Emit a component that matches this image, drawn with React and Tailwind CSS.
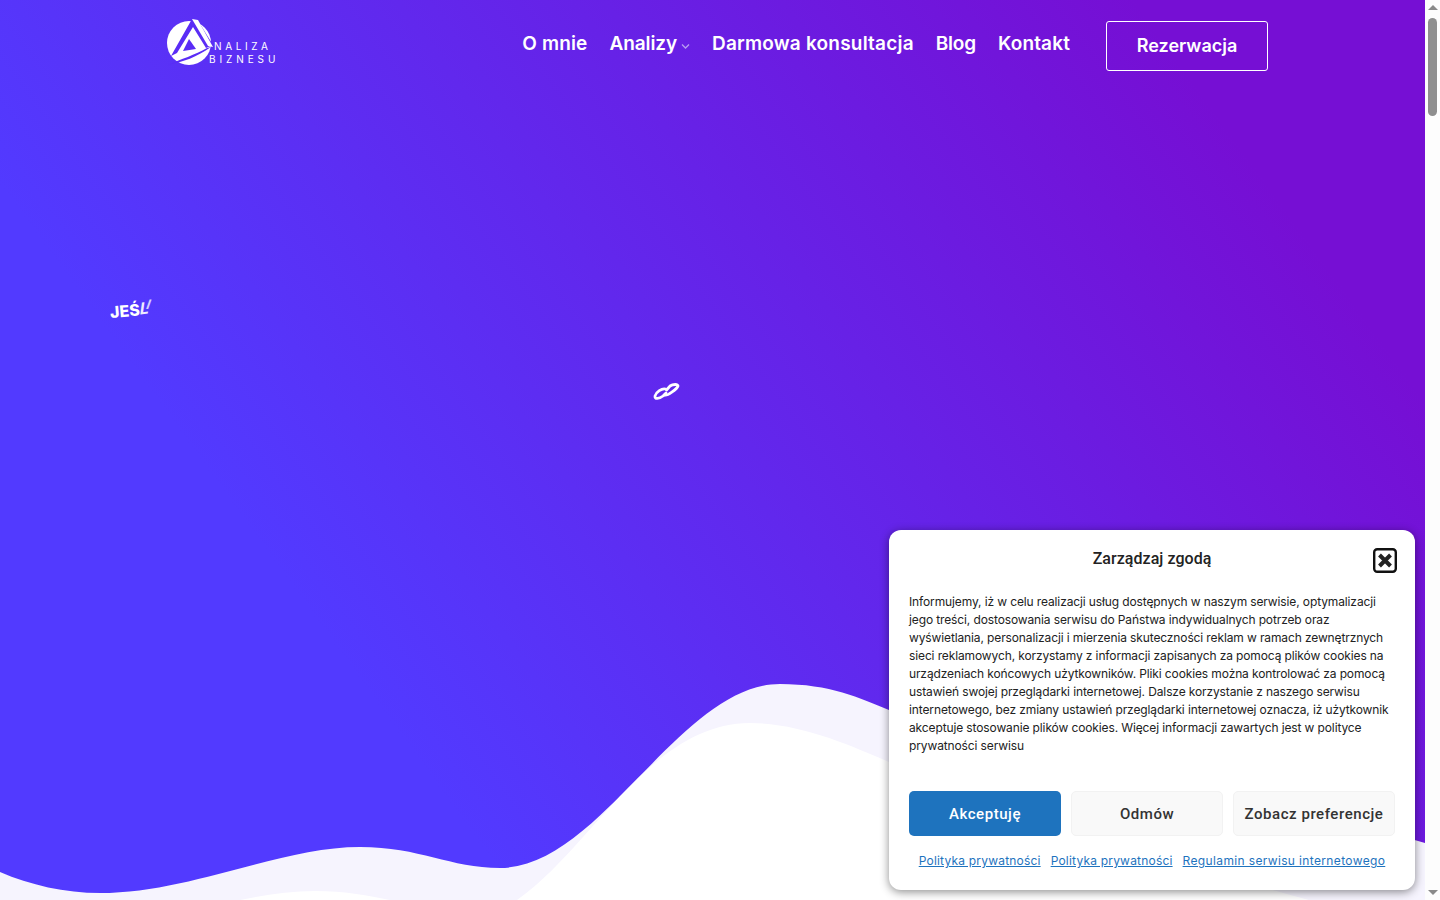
import React from "react";

const nav = "font-['Inter',sans-serif] font-semibold text-[19px] leading-[28px] text-white whitespace-nowrap";

function Logo() {
  return (
    <div className="flex items-start text-white">
      <svg width="46" height="50" viewBox="0 0 46 50" className="shrink-0">
        <circle cx="22" cy="25" r="22" fill="#fff" />
        <path d="M25 1 L4 38 L10 35 L26 9 L39 30 L46 27 L30 1 Z" fill="#5a2cf6" />
        <path d="M25 1 L31 2 L46 29 L41 28 Z" fill="#fff" />
        <path d="M22 21 L29 31 L16 33 Z" fill="#5a2cf6" />
        <path d="M1 47 C 14 41, 28 37, 40 30 L 44 29 C 30 39, 16 44, 1 47 Z" fill="#5a2cf6" />
      </svg>
      <div className="ml-[-4px] mt-[22px] font-['Inter',sans-serif] text-[10px] leading-[13px] font-normal">
        <div className="pl-[5px] tracking-[3.6px] whitespace-nowrap">NALIZA</div>
        <div className="tracking-[3.9px] whitespace-nowrap">BIZNESU</div>
      </div>
    </div>
  );
}

function Waves() {
  return (
    <svg className="absolute left-0 top-0" width="1425" height="900" viewBox="0 0 1425 900">
      <path
        d="M0 872 C30 885 65 893 100 893 C190 893 280 847 360 847 C420 847 450 868 500 868 C600 868 680 684 780 684 C830 684 860 698 889 710 C1000 755 1250 790 1425 843 L1425 900 L0 900 Z"
        fill="#f6f4fe"
      />
      <path d="M240 900 C265 895 290 891 315 891 C345 891 365 895 390 900 Z" fill="#fff" />
      <path
        d="M517 900 C590 850 650 723 750 723 C800 723 850 745 889 762 C1050 830 1300 900 1425 930 L517 930 Z"
        fill="#fff"
      />
    </svg>
  );
}

function CloseIcon() {
  return (
    <svg width="24" height="25" viewBox="0 0 24 25">
      <rect x="1.2" y="1.2" width="21.6" height="22.6" rx="3" fill="#fff" stroke="#111" strokeWidth="2.4" />
      <path d="M6.5 7 L17.5 18 M17.5 7 L6.5 18" stroke="#222" strokeWidth="4" />
    </svg>
  );
}

function Dialog() {
  const btn = "h-[45px] pt-[1px] rounded-[5px] text-[15px] font-medium font-['Roboto',sans-serif] flex items-center justify-center tracking-[0.55px]";
  const link = "text-[#1e73be] underline text-[12px] font-['Inter',sans-serif] whitespace-nowrap";
  return (
    <div className="absolute right-[10px] bottom-[10px] w-[526px] h-[360px] bg-white rounded-[12px] shadow-[0_2px_10px_rgba(0,0,0,0.45)] px-[20px] font-['Roboto',sans-serif] text-[#222]">
      <div className="relative h-[58px] flex items-center justify-center">
        <div className="text-[16px] font-medium text-[#222] tracking-[0.05px]">Zarządzaj zgodą</div>
        <div className="absolute right-[-2px] top-[18px]"><CloseIcon /></div>
      </div>
      <p className="mt-[5px] font-['Inter',sans-serif] text-[12px] leading-[18px] text-[#222] tracking-[-0.12px] whitespace-nowrap">
        Informujemy, iż w celu realizacji usług dostępnych w naszym serwisie, optymalizacji<br />
        jego treści, dostosowania serwisu do Państwa indywidualnych potrzeb oraz<br />
        wyświetlania, personalizacji i mierzenia skuteczności reklam w ramach zewnętrznych<br />
        sieci reklamowych, korzystamy z informacji zapisanych za pomocą plików cookies na<br />
        urządzeniach końcowych użytkowników. Pliki cookies można kontrolować za pomocą<br />
        ustawień swojej przeglądarki internetowej. Dalsze korzystanie z naszego serwisu<br />
        internetowego, bez zmiany ustawień przeglądarki internetowej oznacza, iż użytkownik<br />
        akceptuje stosowanie plików cookies. Więcej informacji zawartych jest w polityce<br />
        prywatności serwisu
      </p>
      <div className="mt-[36px] flex gap-[10px]">
        <div className={btn + " w-[152px] bg-[#1e73be] text-white"}>Akceptuję</div>
        <div className={btn + " w-[152px] bg-[#f9f9f9] border border-[#f2f2f2] text-[#333]"}>Odmów</div>
        <div className={btn + " w-[162px] bg-[#f9f9f9] border border-[#f2f2f2] text-[#333]"}>Zobacz preferencje</div>
      </div>
      <div className="mt-[16px] flex justify-center gap-[10px]">
        <span className={link + " tracking-[0.2px]"}>Polityka prywatności</span>
        <span className={link + " tracking-[0.2px]"}>Polityka prywatności</span>
        <span className={link + " tracking-[0.36px]"}>Regulamin serwisu internetowego</span>
      </div>
    </div>
  );
}

function Scrollbar() {
  return (
    <div className="w-[15px] h-full bg-[#fdfdfd] flex flex-col items-center relative shrink-0">
      <div className="mt-[5px] w-0 h-0 border-l-[5px] border-r-[5px] border-b-[5px] border-l-transparent border-r-transparent border-b-[#8a8a8a]" />
      <div className="mt-[8px] w-[9px] h-[98px] rounded-[5px] bg-[#8f8f8f]" />
      <div className="mt-auto mb-[5px] w-0 h-0 border-l-[5px] border-r-[5px] border-t-[5px] border-l-transparent border-r-transparent border-t-[#8a8a8a]" />
    </div>
  );
}

export default function App() {
  return (
    <div className="flex h-screen w-full overflow-hidden">
      <div className="relative flex-1 h-full bg-[linear-gradient(54deg,#523aff_25%,#760fd4_86%)]">
        <Waves />
        <div className="relative">
          <header className="flex items-start pl-[167px] pr-[157px] pt-[21px]">
            <div className="-mt-[3px]"><Logo /></div>
            <nav className="ml-auto flex items-center gap-[22px] mt-[9px]">
              <span className={nav + " tracking-[0.15px]"}>O mnie</span>
              <span className={nav + " tracking-[-0.1px] flex items-center gap-[4px]"}>
                Analizy
                <svg width="9" height="10" viewBox="0 0 9 10" className="mt-[4px]">
                  <path d="M1 3.5 L4.5 7 L8 3.5" fill="none" stroke="#b79cf0" strokeWidth="1.3" />
                </svg>
              </span>
              <span className={nav + " tracking-[0.2px]"}>Darmowa konsultacja</span>
              <span className={nav + " tracking-[-0.2px]"}>Blog</span>
              <span className={nav + " tracking-[0.15px]"}>Kontakt</span>
            </nav>
            <div className="ml-[36px] w-[162px] h-[50px] pb-[2px] border border-white rounded-[3px] flex items-center justify-center font-['Inter',sans-serif] font-semibold text-[18px] text-white">
              Rezerwacja
            </div>
          </header>
          <div className="pl-[110px] mt-[225px] flex items-end font-['Inter',sans-serif] font-extrabold text-white h-[24px]">
            <span className="text-[16px] leading-none -rotate-[5deg] origin-left inline-block">JEŚ</span>
            <span className="text-[16px] leading-none inline-block font-bold -skew-x-[14deg] -rotate-[6deg] -translate-y-[4px] opacity-90">L</span>
            <span className="text-[13px] leading-none inline-block -skew-x-[20deg] -translate-y-[9px] font-bold opacity-75 ml-[-2px]">I</span>
          </div>
          <div className="pl-[653px] mt-[63px]">
            <svg width="27" height="18" viewBox="0 0 27 18" fill="none" stroke="#fff" strokeWidth="2.8" strokeLinecap="round">
              <path d="M12.5 6 C9 5 3 9 2 13 C1.5 16.5 6 16 10 13 L13 10" />
              <path d="M11.5 12 C14 13.5 24 6 25 3 C25.5 1 20 1 17 3 L13.5 7" />
            </svg>
          </div>
        </div>
        <Dialog />
      </div>
      <Scrollbar />
    </div>
  );
}
